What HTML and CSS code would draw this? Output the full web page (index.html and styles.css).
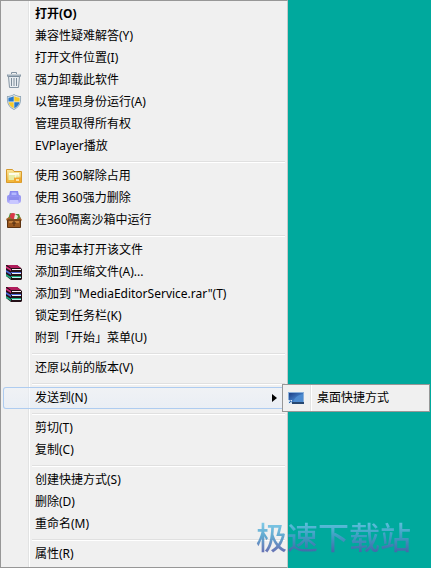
FILE: index.html
```html
<!DOCTYPE html>
<html lang="zh-CN">
<head>
<meta charset="utf-8">
<title>右键菜单</title>
<link rel="stylesheet" href="styles.css">
</head>
<body>
<svg class="defs" aria-hidden="true">
  <defs>
    <linearGradient id="gold" x2="0" y2="1"><stop stop-color="#ffe79a"/><stop offset="1" stop-color="#e9a92c"/></linearGradient>
    <linearGradient id="violet" x2="0" y2="1"><stop stop-color="#8e8ff0"/><stop offset="1" stop-color="#b0adfa"/></linearGradient>
    <linearGradient id="screen" x2="1" y2="1"><stop stop-color="#1c3f86"/><stop offset=".55" stop-color="#3f78c0"/><stop offset="1" stop-color="#1b4a94"/></linearGradient>
    <symbol id="books" viewBox="0 0 16 16">
      <path d="M0 1h11l5 4v10l-1 1H5l-5-4z" fill="#241018"/>
      <path d="M1 1h10l4 3H5z" fill="#b01c5c"/>
      <path d="M0 2l5 3v2L0 4z" fill="#d8307c"/>
      <path d="M6 5h9v1H6z" fill="#fbeef4"/>
      <path d="M0 6l5 3v2L0 8z" fill="#4a68d8"/>
      <path d="M5 8h10v1H5z" fill="#4a68d8"/>
      <path d="M6 9h9v1H6z" fill="#eef0fc"/>
      <path d="M0 10l5 3v2l-5-3z" fill="#1ba87c"/>
      <path d="M5 12h10v1H5z" fill="#1ba87c"/>
      <path d="M6 13h9v1H6z" fill="#b5f3ef"/>
    </symbol>
  </defs>
</svg>
<nav class="menu" aria-label="文件菜单">
  <ul class="group">
    <li><button class="item default">打开(O)</button></li>
    <li><button class="item">兼容性疑难解答(Y)</button></li>
    <li><button class="item">打开文件位置(I)</button></li>
    <li><button class="item"><svg class="icon" viewBox="0 0 16 16"><path d="M2.500 4.500h11l-1 11h-9z" fill="#e9edf1" stroke="#8595a3"/><path d="M5.500 6v8M8 6v8M10.500 6v8" stroke="#7d8c99"/><path d="M1 3.500h14" stroke="#718292" stroke-width="2"/><path d="M1.500 3h13" stroke="#dce4ea"/><path d="M5.500 2V.5h5V2" fill="none" stroke="#8292a0"/></svg>强力卸载此软件</button></li>
    <li><button class="item"><svg class="icon" viewBox="0 0 16 16"><path d="M8 0c2 1.500 4.500 2 7 2 .5 7-1 11-7 14C2 13 .5 9 1 2c2.500 0 5-.5 7-2z" fill="#8fa5b5"/><path d="M8 1c2 1.200 4 1.800 6.200 2 .2 6-1.200 9.500-6.200 12-5-2.500-6.400-6-6.200-12C4 2.800 6 2.200 8 1z" fill="#dfe8ee"/><path d="M7.700 2.300V7.500H2.500c-.2-1.500-.1-2.500 0-3.700 2-.2 3.600-.7 5.200-1.500z" fill="#2878c8"/><path d="M8.300 2.300v5.200h5.200c.2-1.500.1-2.500 0-3.700-2-.2-3.600-.7-5.200-1.500zM7.700 8.200v6C4.500 12.500 3 10.500 2.600 8.200z" fill="#f7ca28"/><path d="M8.300 8.200h5.100c-.4 2.300-1.900 4.300-5.100 6z" fill="#2878c8"/></svg>以管理员身份运行(A)</button></li>
    <li><button class="item">管理员取得所有权</button></li>
    <li><button class="item">EVPlayer播放</button></li>
  </ul>
  <ul class="group">
    <li><button class="item"><svg class="icon" viewBox="0 0 16 16"><path d="M.5 14.500V1.500h6l1.500 2h7.500v11z" fill="url(#gold)" stroke="#d69a2d"/><path d="M2.500 4.500h11v8h-11z" fill="#e6eda8"/><path d="M3 5h10v2H3z" fill="#fffdea"/><path d="M1 12h14v2H1z" fill="#f2b83c"/><path d="M8 9.500h7v5H8z" fill="#f1a92e"/><path d="M9.500 9.500V8.200c0-2 3.500-2 3.500 0M10 12h3" fill="none" stroke="#fff5c9" stroke-width="1.300"/></svg>使用 360解除占用</button></li>
    <li><button class="item"><svg class="icon" viewBox="0 0 16 16"><path d="M4 1h8l1 5H3z" fill="#8888ef"/><path d="M5.500 2.500h5v3h-5z" fill="#b5b9ff"/><rect x="1" y="5" width="14" height="8" rx="2" fill="url(#violet)"/><path d="M3 7h10v3H3z" fill="#8d8ced"/><path d="M4 10h8l1 4H3z" fill="#c8c7ff"/></svg>使用 360强力删除</button></li>
    <li><button class="item"><svg class="icon" viewBox="0 0 16 16"><path d="M2 7 4 1l4 1 5 0 2 5z" fill="#54903c"/><circle cx="7" cy="4" r="3" fill="#d93848"/><path d="M9 2l3 2-1 3H8z" fill="#e3eee0"/><path d="M0 7l3-2 2 2h7l2-2 2 3-1 1H1z" fill="#a96427"/><path d="M1.500 8h13v7.500h-13z" fill="#98571f" stroke="#5b3212"/><path d="M3 9h10v2H3z" fill="#c4803b"/><path d="M8 9v5M6 11h4" stroke="#4f2d12"/></svg>在360隔离沙箱中运行</button></li>
  </ul>
  <ul class="group">
    <li><button class="item">用记事本打开该文件</button></li>
    <li><button class="item"><svg class="icon"><use href="#books"/></svg>添加到压缩文件(A)...</button></li>
    <li><button class="item"><svg class="icon"><use href="#books"/></svg>添加到 "MediaEditorService.rar"(T)</button></li>
    <li><button class="item">锁定到任务栏(K)</button></li>
    <li><button class="item">附到「开始」菜单(U)</button></li>
  </ul>
  <ul class="group">
    <li><button class="item">还原以前的版本(V)</button></li>
  </ul>
  <ul class="group">
    <li class="parent">
      <button class="item active" aria-haspopup="true" aria-expanded="true">发送到(N)<svg class="arrow" viewBox="0 0 5 8"><path d="M0 0l5 4-5 4z"/></svg></button>
      <ul class="submenu">
        <li><button class="item"><svg class="icon" viewBox="0 0 16 16"><path d="M0 2h16v12H0z" fill="#8bb0da"/><path d="M1 3h14v9H1z" fill="url(#screen)"/><path d="M5 12C7 7 10 5 15 4v8z" fill="#4d8bd0"/><path d="M0 12h16v2H0z" fill="#26466f"/><path d="M0 10h4v4H0z" fill="#e1edf7"/><path d="M1 13l2-2M1.500 11H3v1.500" stroke="#2d66ac" fill="none"/></svg>桌面快捷方式</button></li>
      </ul>
    </li>
  </ul>
  <ul class="group">
    <li><button class="item">剪切(T)</button></li>
    <li><button class="item">复制(C)</button></li>
  </ul>
  <ul class="group">
    <li><button class="item">创建快捷方式(S)</button></li>
    <li><button class="item">删除(D)</button></li>
    <li><button class="item">重命名(M)</button></li>
  </ul>
  <ul class="group">
    <li><button class="item">属性(R)</button></li>
  </ul>
</nav>
<div class="watermark">极速下载站</div>
</body>
</html>
```
FILE: styles.css
```css
* {
  box-sizing: border-box;
}

body {
  margin: 0;
  min-height: 100vh;
  position: relative;
  background: #00a99d;
  font: 12px/22px "Noto Sans", "Noto Sans CJK SC", sans-serif;
  color: #000;
}

ul {
  list-style: none;
  margin: 0;
  padding: 0;
}

.defs {
  position: absolute;
  width: 0;
  height: 0;
}

.menu {
  width: max-content;
  min-width: 288px;
  padding: 2px;
  border: 1px solid #979797;
  border-right-color: #c4c8c8;
  background: linear-gradient(90deg, #f0f0f0 27px, #e2e3e3 27px 28px, #fff 28px 29px, #f0f0f0 29px) padding-box;
}

.group + .group {
  padding-top: 4px;
}

.group + .group::before {
  content: "";
  display: block;
  margin: 0 0 2px 29px;
  border-top: 1px solid #e0e0e0;
  border-bottom: 1px solid #fff;
}

.item {
  display: flex;
  align-items: center;
  position: relative;
  width: 100%;
  height: 22px;
  padding: 0 8px 0 32px;
  border: 0;
  background: none;
  font: inherit;
  color: inherit;
  text-align: left;
  white-space: pre;
}

.default {
  font-weight: 700;
}

.active {
  border-radius: 3px;
  background: linear-gradient(#f0f4fa80, #e3ecf980);
  box-shadow: inset 0 0 0 1px #aeccf0;
}

.icon {
  position: absolute;
  left: 3px;
  width: 16px;
  height: 16px;
}

.arrow {
  width: 5px;
  height: 8px;
  margin-left: auto;
}

.parent {
  position: relative;
}

.submenu {
  position: absolute;
  z-index: 1;
  left: calc(100% - 3px);
  top: -3px;
  width: 148px;
  padding: 2px;
  border: 1px solid #979797;
  background: linear-gradient(90deg, #f0f0f0 27px, #e2e3e3 27px 28px, #fff 28px 29px, #f0f0f0 29px) padding-box;
}

.watermark {
  position: absolute;
  right: 20px;
  bottom: 10px;
  font-family: "Noto Sans CJK SC", sans-serif;
  font-size: 31px;
  font-weight: 500;
  line-height: 44px;
  background: linear-gradient(#6cc4e6 20%, #4a9dca 50%, #5060ac 85%);
  background-clip: text;
  color: transparent;
  opacity: 0.85;
}
```
